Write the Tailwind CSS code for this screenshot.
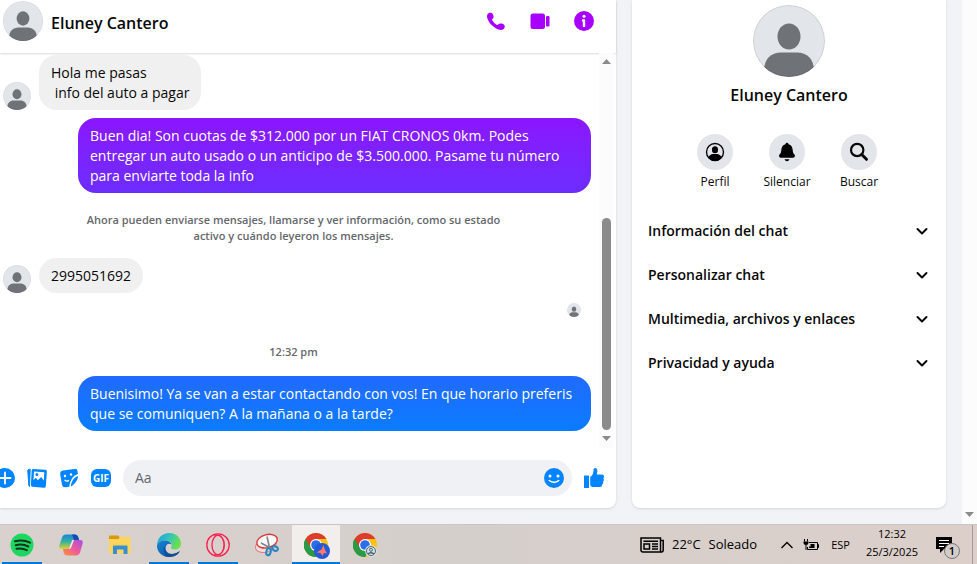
<!DOCTYPE html>
<html lang="es">
  <head>
    <title>Eluney Cantero</title>
    <meta charset="UTF-8" />
    <meta name="viewport" content="width=device-width, initial-scale=1.0" />
    <script src="https://cdn.jsdelivr.net/npm/@tailwindcss/browser@4"></script>
  </head>

  <body class="flex flex-col h-screen overflow-hidden bg-[#f2f3f7] font-['Open_Sans','Noto_Sans',sans-serif] text-sm text-[#080809]">
    <!-- Shared shapes -->
    <svg class="hidden" aria-hidden="true">
      <symbol id="avatar" viewBox="0 0 72 72">
        <rect width="72" height="72" fill="#e2e5ea" />
        <ellipse cx="36" cy="31.500" rx="11.500" ry="13" fill="#6f7277" />
        <path d="M11 66C11 54 18 47.500 28 47.500H44C54 47.500 61 54 61 66V72H11Z" fill="#6f7277" />
        <circle cx="36" cy="36" r="35.500" fill="none" stroke="#000" stroke-opacity=".1" />
      </symbol>
      <symbol id="chevron" viewBox="0 0 20 20">
        <path d="M5.500 8L10 12.500L14.500 8" fill="none" stroke="#080809" stroke-width="2" stroke-linecap="round" stroke-linejoin="round" />
      </symbol>
      <symbol id="chrome" viewBox="0 0 24 24">
        <circle cx="12" cy="12" r="12" fill="#fbc116" />
        <path d="M12 12L1.600 6A12 12 0 0 0 12 24L17.200 15Z" fill="#2a9a47" />
        <path d="M12 12L1.600 6A12 12 0 0 1 22.400 6H12Z" fill="#dd3b2e" />
        <path d="M1.600 6L6.800 15L12 12V6Z" fill="#dd3b2e" />
        <path d="M1.600 6L6.800 15A6 6 0 0 0 12 18L17.200 15L12 24A12 12 0 0 1 1.600 6Z" fill="#2a9a47" />
        <circle cx="12" cy="12" r="6" fill="#fff" />
        <circle cx="12" cy="12" r="4.800" fill="#2a6fe8" />
      </symbol>
    </svg>

    <div class="flex flex-1 min-h-0">
      <div class="flex flex-1 min-w-0 gap-4 pr-4 pb-4">
        <!-- Chat starts here -->
        <main class="flex flex-col flex-1 min-w-0 bg-white rounded-br-lg shadow">
          <header class="flex shrink-0 items-center h-[53px] pl-[3px] pr-[22px] pb-[11px] shadow-[0_1px_2px_rgba(0,0,0,0.15)]">
            <svg class="size-10 shrink-0 rounded-full"><use href="#avatar" /></svg>
            <h1 class="flex-1 pl-2 pt-1 text-base font-semibold">Eluney Cantero</h1>
            <div class="flex gap-6">
              <button aria-label="Llamar">
                <svg class="size-5" viewBox="0 0 20 20" fill="#a800ff"><path d="M1.400 3.400C2 2.200 3.200 1.600 4.700 1.700C6 1.800 7 3 7.400 4.500C7.800 6 7.500 7 6.500 7.900C6 8.300 6 8.900 6.400 9.500C7.500 11.300 8.900 12.700 10.600 13.700C11.200 14 11.700 14 12.100 13.500C13 12.500 14.200 12.200 15.600 12.500C17.500 13 18.700 14 18.800 15.300C18.800 16.700 18 17.900 16.900 18.500C15 19.400 12.200 18.700 9 16.700C5.800 14.700 3.300 12 2 9C1 6.700 .700 4.800 1.400 3.400Z" /></svg>
              </button>
              <button aria-label="Videollamada">
                <svg class="size-5" viewBox="0 0 20 20" fill="#a800ff"><rect x=".500" y="2.500" width="14.500" height="15.500" rx="2.500" /><rect x="16" y="5" width="3.500" height="10.500" rx="1.200" /></svg>
              </button>
              <button aria-label="Información">
                <svg class="size-5" viewBox="0 0 20 20"><circle cx="10" cy="10" r="10" fill="#a800ff" /><circle cx="10" cy="5.300" r="1.500" fill="#fff" /><path d="M9 9.500H10V15" fill="none" stroke="#fff" stroke-width="2.400" stroke-linecap="round" stroke-linejoin="round" /></svg>
              </button>
            </div>
          </header>

          <!-- Messages and their scrollbar -->
          <div class="flex flex-1 min-h-0 pr-0.5">
            <div class="flex-1 min-w-0 pt-0.5 pr-2 leading-5">
              <div class="flex items-end gap-2 pl-[3px]">
                <svg class="size-7 shrink-0 rounded-full"><use href="#avatar" /></svg>
                <p class="rounded-[18px] bg-[#f0f0f0] px-3 pt-2 pb-[7px]">Hola me pasas<br />&nbsp;info del auto a pagar</p>
              </div>

              <p class="ml-auto mt-2 w-[513px] rounded-[18px] bg-linear-to-b from-[#8b14ff] to-[#6c2cff] px-3 pt-2 pb-[7px] text-white">
                Buen dia! Son cuotas de $312.000 por un FIAT CRONOS 0km. Podes<br />entregar un auto usado o un anticipo de $3.500.000. Pasame tu número<br />para enviarte toda la info
              </p>

              <p class="mt-[19px] pr-1 text-center text-[11px] leading-4 font-semibold text-[#65686c]">
                Ahora pueden enviarse mensajes, llamarse y ver información, como su estado<br />activo y cuándo leyeron los mensajes.
              </p>

              <div class="mt-3.5 flex items-end gap-2 pl-[3px]">
                <svg class="size-7 shrink-0 rounded-full"><use href="#avatar" /></svg>
                <p class="rounded-[18px] bg-[#f0f0f0] px-3 pt-2 pb-[7px]">2995051692</p>
              </div>

              <div class="mt-2.5 flex justify-end pr-2.5">
                <svg class="size-3.5 rounded-full"><use href="#avatar" /></svg>
              </div>

              <p class="mt-[27px] pr-1 text-center text-[11px] leading-4 font-semibold text-[#65686c]">12:32 pm</p>

              <p class="ml-auto mt-4 w-[513px] rounded-[18px] bg-linear-to-b from-[#206aff] to-[#087cff] px-3 pt-2 pb-[7px] text-white">
                Buenisimo! Ya se van a estar contactando con vos! En que horario preferis<br />que se comuniquen? A la mañana o a la tarde?
              </p>
            </div>

            <div class="flex w-[15px] shrink-0 flex-col items-center bg-[#fcfcfc] pt-1.5">
              <svg class="h-[5px] w-[9px] shrink-0" viewBox="0 0 9 5" fill="#8b8b8b"><path d="M0 5L4.500 0L9 5Z" /></svg>
              <div class="mt-auto h-[212px] w-[9px] rounded-full bg-[#8b8b8b]"></div>
              <svg class="mt-1.5 mb-[7px] h-[5px] w-[9px] shrink-0" viewBox="0 0 9 5" fill="#8b8b8b"><path d="M0 0L4.500 5L9 0Z" /></svg>
            </div>
          </div>

          <!-- Composer -->
          <div class="flex shrink-0 items-center gap-3 py-3 pr-3">
            <button class="-ml-[5px]" aria-label="Más acciones">
              <svg class="size-5" viewBox="0 0 20 20"><circle cx="10" cy="10" r="10" fill="#0084ff" /><path d="M10 4.500V15.500M4.500 10H15.500" stroke="#fff" stroke-width="1.800" stroke-linecap="round" /></svg>
            </button>
            <button aria-label="Adjuntar foto">
              <svg class="size-5" viewBox="0 0 20 20">
                <path d="M1.500 1.500L3.200 1.200L2.500 18.500L1.800 17.500L.800 3C.700 2.200 1 1.600 1.500 1.500Z" fill="#0084ff" stroke="#0084ff" stroke-linejoin="round" />
                <path d="M6.300 .900L18.300 1.700Q20 1.900 19.900 3.500L18.800 18.200Q18.600 19.800 17 19.700L5.300 18.800Q3.800 18.600 3.900 17L4.700 2.300Q4.900 .900 6.300 .900Z" fill="#0084ff" />
                <path d="M7 3.500L17.300 4.200L16.800 12.400L14.200 9L10.800 12.300L8.900 9.800L6.500 12Z" fill="#fff" />
                <circle cx="9.900" cy="6.400" r="1.500" fill="#0084ff" />
              </svg>
            </button>
            <button aria-label="Elegir un sticker">
              <svg class="size-5" viewBox="0 0 20 20">
                <path d="M4 2.500L15.500 .900Q18.300 .600 18.600 3.200L18.900 6C14.500 7.500 11 11.500 10.300 18.800L6.500 19.300Q3.500 19.600 3 16.800L1.200 6.500Q.800 3.200 4 2.500Z" fill="#0084ff" />
                <path d="M19 8C15.500 9.300 12.300 12.600 11.800 18.500C14.500 17.300 19.200 12.500 19 8Z" fill="#0084ff" />
                <circle cx="6" cy="8" r="1.200" fill="#fff" /><circle cx="12" cy="6.500" r="1.200" fill="#fff" />
                <path d="M6 12.300Q7.500 13.800 9.500 12.600" fill="none" stroke="#fff" stroke-width="1.400" stroke-linecap="round" />
              </svg>
            </button>
            <button class="flex h-[18px] w-5 items-center justify-center rounded-[6px] bg-[#0084ff] text-[10px] leading-none font-bold text-white" aria-label="Elegir un GIF">GIF</button>
            <div class="flex h-9 min-w-0 flex-1 items-center rounded-full bg-[#f0f1f5] pr-2 pl-3">
              <input class="min-w-0 flex-1 bg-transparent outline-none placeholder:text-[#65686c]" type="text" aria-label="Mensaje" placeholder="Aa" />
              <button aria-label="Elegir un emoji">
                <svg class="size-5" viewBox="0 0 20 20"><circle cx="10" cy="10" r="10" fill="#0084ff" /><circle cx="6" cy="8" r="1.500" fill="#fff" /><circle cx="14" cy="8" r="1.500" fill="#fff" /><path d="M5.300 12.500Q10 16.300 14.700 12.500" fill="none" stroke="#fff" stroke-width="1.600" stroke-linecap="round" /></svg>
              </button>
            </div>
            <button aria-label="Me gusta">
              <svg class="size-5" viewBox="0 0 20 20" fill="#0084ff"><rect y="7.500" width="5" height="12.500" rx=".600" /><path d="M6.200 9C8.500 7.500 9.500 5.500 9.500 2C9.500 .700 10.200 0 11.200 0C13 0 13.700 2 13.200 4.500L12.800 6.500H18Q20 6.700 20 8.500Q20 9.700 19.300 10.300Q20.300 11.300 19.700 12.700Q19.500 13.300 19 13.800Q19.600 15.500 18.200 16.500Q18.300 19 15.800 19H8.500Q6.200 18.800 6.200 16.500Z" /></svg>
            </button>
          </div>
        </main>
        <!-- Chat ends here -->

        <!-- Contact panel starts here -->
        <aside class="flex w-[314px] shrink-0 flex-col items-center rounded-b-lg bg-white pt-[5px] shadow">
          <svg class="size-[72px] rounded-full"><use href="#avatar" /></svg>
          <h2 class="mt-1.5 text-base font-semibold">Eluney Cantero</h2>

          <div class="mt-[27px] mr-1 flex text-xs">
            <button class="flex w-[72px] flex-col items-center gap-1">
              <span class="flex size-9 items-center justify-center rounded-full bg-[#e2e5ea]">
                <svg class="size-5" viewBox="0 0 20 20"><circle cx="10" cy="10" r="8.500" fill="none" stroke="#080809" stroke-width="1.400" /><ellipse cx="10" cy="7.700" rx="3.100" ry="3.500" /><path d="M3.200 15.500Q5 12 8 12H12Q15 12 16.800 15.500Q14.500 19 10 19Q5.500 19 3.200 15.500Z" /></svg>
              </span>
              Perfil
            </button>
            <button class="flex w-[72px] flex-col items-center gap-1">
              <span class="flex size-9 items-center justify-center rounded-full bg-[#e2e5ea]">
                <svg class="size-5" viewBox="0 0 20 20"><path d="M10 .800C10.800 .800 11.400 1.400 11.500 2.200C14.300 3 15.500 5 15.700 8C15.800 10.300 16.300 11.300 17.500 12.600C18.500 13.900 17.800 15.800 16 15.800H4C2.200 15.800 1.500 13.900 2.500 12.600C3.700 11.300 4.200 10.300 4.300 8C4.500 5 5.700 3 8.500 2.200C8.600 1.400 9.200 .800 10 .800Z" /><path d="M7.500 17.300H12.500Q11.800 19.200 10 19.200T7.500 17.300Z" /></svg>
              </span>
              Silenciar
            </button>
            <button class="flex w-[72px] flex-col items-center gap-1">
              <span class="flex size-9 items-center justify-center rounded-full bg-[#e2e5ea]">
                <svg class="size-5" viewBox="0 0 20 20" fill="none" stroke="#080809"><circle cx="8.200" cy="8" r="6.200" stroke-width="2.200" /><path d="M12.700 12.500L17.500 17.300" stroke-width="3" stroke-linecap="round" /></svg>
              </span>
              Buscar
            </button>
          </div>

          <div class="mt-[19px] w-full pr-3.5 pl-4 font-semibold">
            <button class="flex h-11 w-full items-center justify-between">Información del chat<svg class="size-5"><use href="#chevron" /></svg></button>
            <button class="flex h-11 w-full items-center justify-between">Personalizar chat<svg class="size-5"><use href="#chevron" /></svg></button>
            <button class="flex h-11 w-full items-center justify-between">Multimedia, archivos y enlaces<svg class="size-5"><use href="#chevron" /></svg></button>
            <button class="flex h-11 w-full items-center justify-between">Privacidad y ayuda<svg class="size-5"><use href="#chevron" /></svg></button>
          </div>
        </aside>
        <!-- Contact panel ends here -->
      </div>

      <div class="flex w-[15px] shrink-0 flex-col items-center justify-end bg-[#fcfcfc] pb-[7px]">
        <svg class="h-[5px] w-[9px]" viewBox="0 0 9 5" fill="#8b8b8b"><path d="M0 0L4.500 5L9 0Z" /></svg>
      </div>
    </div>

    <!-- Taskbar starts here -->
    <footer class="flex h-10 shrink-0 border-t border-[#c9c5c5] bg-linear-to-r from-[#d8d1cd] via-[#d5cfcb] to-[#dccfca] text-black">
      <nav class="-ml-0.5 flex gap-px">
        <button class="relative flex w-12 items-center justify-center" aria-label="Spotify">
          <svg class="size-6" viewBox="0 0 24 24"><circle cx="12" cy="12" r="11.500" fill="#1ed760" /><path d="M5 8.300Q13 6 20 9.700M5.700 12.200Q12.500 10.500 18.300 13.500M6.500 15.800Q12 14.500 16.800 17.200" fill="none" stroke="#10331c" stroke-width="2" stroke-linecap="round" /></svg>
          <span class="absolute inset-x-1 bottom-0 h-0.5 bg-[#0078d7]"></span>
        </button>
        <button class="flex w-12 items-center justify-center" aria-label="Copilot">
          <svg class="size-6" viewBox="0 0 24 24">
            <defs>
              <linearGradient id="cpa" x1="0" y1="0" x2="0" y2="1"><stop offset="0" stop-color="#1683dc" /><stop offset=".5" stop-color="#34b4a0" /><stop offset="1" stop-color="#e7cf22" /></linearGradient>
              <linearGradient id="cpb" x1="1" y1="0" x2="0" y2="1"><stop offset="0" stop-color="#a44de8" /><stop offset=".5" stop-color="#ee5a9b" /><stop offset="1" stop-color="#fb923c" /></linearGradient>
            </defs>
            <path d="M7 1.500H16Q18.500 1.500 19.200 4L20 7H16Q13.500 7 12.700 9.500L10.700 16H3Q-.500 16 .500 12L3 4.500Q4 1.500 7 1.500Z" fill="url(#cpa)" />
            <path d="M13 1.500H16Q18.500 1.500 19.200 4L20 7H15Z" fill="#1949b8" />
            <path d="M17 22.500H8Q5.500 22.500 4.800 20L4 16H8Q10.500 16 11.300 13.500L13.300 7H21Q24.500 7 23.500 11L21 19.500Q20 22.500 17 22.500Z" fill="url(#cpb)" />
            <path d="M13.300 7L9.700 16.500L12 15L15 7Z" fill="#efe8f0" />
          </svg>
        </button>
        <button class="flex w-12 items-center justify-center" aria-label="Explorador de archivos">
          <svg class="size-6" viewBox="0 0 24 24"><path d="M1 3.500Q1 2.500 2 2.500H10L12 4.500V7H1Z" fill="#d99a09" /><path d="M1 6H10.500L12 4H21.500Q22.500 4 22.500 5V20.500H1Z" fill="#fed45c" /><path d="M5 21V13.500Q5 12.500 6 12.500H18.500Q19.500 12.500 19.500 13.500V21H15.500V16.500H9V21Z" fill="#368fd3" /></svg>
        </button>
        <button class="relative flex w-12 items-center justify-center" aria-label="Microsoft Edge">
          <svg class="size-6" viewBox="0 0 24 24">
            <defs>
              <linearGradient id="ea" x1="0" y1="0" x2="1" y2=".4"><stop offset="0" stop-color="#209fd9" /><stop offset=".5" stop-color="#30c3c0" /><stop offset="1" stop-color="#6be04f" /></linearGradient>
              <linearGradient id="eb" x1="0" y1="0" x2="1" y2="1"><stop offset="0" stop-color="#1686d8" /><stop offset="1" stop-color="#0b478f" /></linearGradient>
            </defs>
            <path d="M0 11.500C.500 5 5.500 0 12 0C19 0 24 4.700 24 10.500C24 14 21.500 16.500 18 16.500C15.300 16.500 13.800 15.500 14 14.500C16 12 14.500 7.500 9.500 7.500C4.500 7.500 1.500 9.500 0 11.500Z" fill="url(#ea)" />
            <path d="M0 12C1.500 8.500 5 7 9 7.500C12 7.700 14 9.500 14.500 11.500C12 9.500 8.500 11.500 8.500 15C8.500 19 12.500 22 18 20.500C21 19.700 22.500 18 22.800 18.300C21 22 16.500 24 12 24C5 24-.500 18.500 0 12Z" fill="url(#eb)" />
            <path d="M9 12.500C6.500 17 10 22.500 16 21C18.500 20.600 21 19.500 22.800 18.300C21 22 16.500 24 12 24C7 23 5 16 9 12.500Z" fill="#124f96" />
          </svg>
          <span class="absolute inset-x-1 bottom-0 h-0.5 bg-[#0078d7]"></span>
        </button>
        <button class="relative flex w-12 items-center justify-center" aria-label="Opera GX">
          <svg class="size-6" viewBox="0 0 24 24" fill="none" stroke="#fa1e4e"><circle cx="12" cy="12" r="11.200" stroke-width="1.300" /><ellipse cx="12" cy="12" rx="6" ry="9.800" stroke-width="1.300" /><path d="M8 2.500C15 1 18.500 6 18.500 12S15 23 8 21.500" stroke-width=".800" /></svg>
          <span class="absolute inset-x-1 bottom-0 h-0.5 bg-[#0078d7]"></span>
        </button>
        <button class="flex w-12 items-center justify-center" aria-label="Recortes">
          <svg class="size-6" viewBox="0 0 24 24">
            <g transform="rotate(-15 11 10)"><ellipse cx="10" cy="12.500" rx="10.500" ry="6.500" fill="#e8dfdf" stroke="#e58080" /><ellipse cx="12.500" cy="8.500" rx="10.500" ry="6.500" fill="#f7f7f7" stroke="#d63a3a" stroke-width="1.400" /></g>
            <path d="M12 3.500L14.500 15M6 10L16.500 15.500" stroke="#7b858b" stroke-width="1.600" />
            <g fill="none" stroke="#2786c4" stroke-width="2"><ellipse cx="13.500" cy="18.800" rx="2.200" ry="3.500" transform="rotate(15 13.500 18.800)" /><ellipse cx="20" cy="15.500" rx="3" ry="2.200" transform="rotate(25 20 15.500)" /></g>
          </svg>
        </button>
        <button class="relative flex w-12 items-center justify-center bg-[#f2eeec]" aria-label="Google Chrome">
          <svg class="size-6 overflow-visible" viewBox="0 0 24 24"><use href="#chrome" width="24" height="24" /><circle cx="18" cy="18" r="8" fill="#2459d8" /><path d="M12.500 19.500L17.500 16.500L19.500 12L20.500 16L23 20.500L20 20L18.500 23L16.500 20Z" fill="#ff7a68" /></svg>
          <span class="absolute inset-x-0 bottom-0 h-0.5 bg-[#0078d7]"></span>
        </button>
        <button class="flex w-12 items-center justify-center" aria-label="Google Chrome, perfil">
          <svg class="size-6 overflow-visible" viewBox="0 0 24 24"><use href="#chrome" width="24" height="24" /><circle cx="18" cy="18" r="6" fill="#d5e0e2" /><circle cx="18" cy="18" r="4.500" fill="none" stroke="#4a6972" /><circle cx="18" cy="16.800" r="1.500" fill="none" stroke="#4a6972" /><path d="M15 21Q18 18.500 21 21" fill="none" stroke="#4a6972" stroke-width="1.300" /></svg>
        </button>
      </nav>

      <div class="ml-auto flex items-center">
        <button class="flex items-center gap-2 text-[13px]">
          <svg class="h-4 w-6" viewBox="0 0 24 16" fill="none" stroke="#000" stroke-width="1.500"><path d="M20.500 14.500V1H1V13Q1 15 3 15H21.500Q23.200 15 23.200 13V3.500H20.500" /><rect x="4" y="7" width="5.500" height="5" /><path d="M3.500 4.200H18M12 7H18M12 9.500H18M12 12H18" /></svg>
          <span>22°C</span><span>Soleado</span>
        </button>
        <button class="ml-6" aria-label="Mostrar iconos ocultos">
          <svg class="h-2 w-3" viewBox="0 0 12 8" fill="none" stroke="#000" stroke-width="1.300"><path d="M.500 7L6 1.500L11.500 7" /></svg>
        </button>
        <svg class="ml-2.5 h-3 w-4" viewBox="0 0 16 12" fill="none" stroke="#000" role="img" aria-label="Batería"><path d="M6 3.500H14.500V10.500H4.500V8M14.500 5.500H15.500V8.500H14.500" /><path d="M7.500 5H11.500V9H6V7.500H7.500Z" fill="#000" stroke="none" /><path d="M1.500 0V2.500M4.500 0V2.500M3 6V11" /><path d="M.500 2.500H5.500V4Q5.500 6 3 6T.500 4Z" fill="#000" stroke="none" /></svg>
        <button class="ml-3 text-[11px]">ESP</button>
        <button class="ml-4 pb-1 text-center text-[11px] leading-[18px]">12:32<br />25/3/2025</button>
        <button class="relative mr-5 ml-[18px]" aria-label="Notificaciones">
          <svg class="size-4" viewBox="0 0 16 16"><path d="M0 0H16V12H8L4 16V12H0Z" /><path d="M3 3.500H13M3 6.500H13M3 9.500H8" stroke="#fff" /></svg>
          <span class="absolute top-1.5 left-2 flex size-4 items-center justify-center rounded-full border border-[#777] bg-[#d3cdca] text-[11px] leading-none font-semibold">1</span>
        </button>
        <span class="h-full w-[5px] border-l border-[#a39c99]"></span>
      </div>
    </footer>
    <!-- Taskbar ends here -->
  </body>
</html>
